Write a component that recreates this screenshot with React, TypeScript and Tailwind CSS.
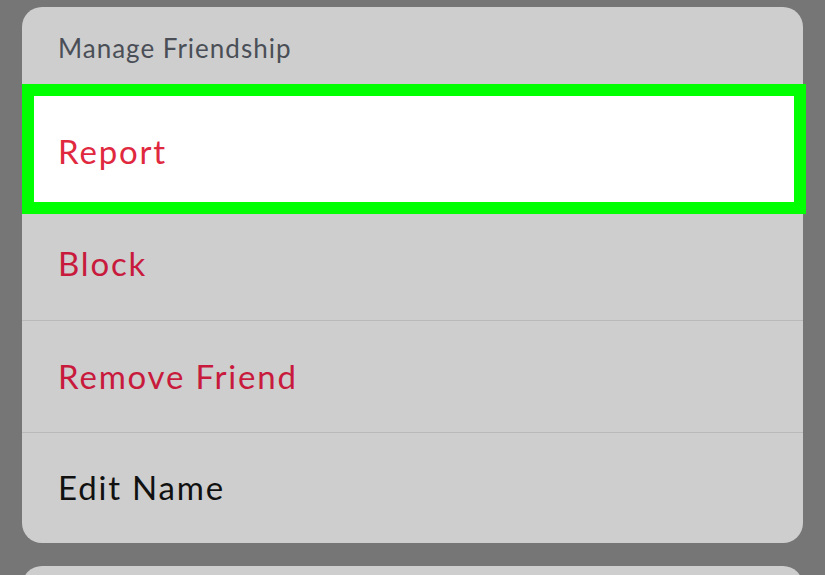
export default function App() {
  const font = { fontFamily: 'Lato, "Noto Sans", sans-serif' };
  return (
    <div className="w-[825px] h-[575px] overflow-hidden bg-[#767676] pl-[22px] pt-[7px] flex flex-col gap-[23px]" style={font}>
      <div className="w-[781px] shrink-0 rounded-[20px] bg-[#cecece] flex flex-col">
        <div className="h-[77px] flex items-center pl-[36px] pt-[6px] text-[26px] text-[#4a4f57] tracking-[1px]">
          Manage Friendship
        </div>
        <div className="h-[130px] w-[784px] border-[12px] border-[#00ff00] bg-white flex items-center pl-[24px] pt-[6px] text-[33px] text-[#e0283f] tracking-[1.8px]">
          Report
        </div>
        <div className="h-[106px] flex items-center pl-[36px] pb-[6px] text-[33px] text-[#c81a3c] tracking-[1.8px]">
          Block
        </div>
        <div className="h-[112px] border-t border-[#b9b9b9] flex items-center pl-[36px] text-[33px] text-[#c81a3c] tracking-[1.8px]">
          Remove Friend
        </div>
        <div className="h-[111px] border-t border-[#b9b9b9] flex items-center pl-[36px] text-[33px] text-[#111111] tracking-[1.8px]">
          Edit Name
        </div>
      </div>
      <div className="w-[781px] h-[60px] shrink-0 rounded-t-[20px] bg-[#cecece]" />
    </div>
  );
}
